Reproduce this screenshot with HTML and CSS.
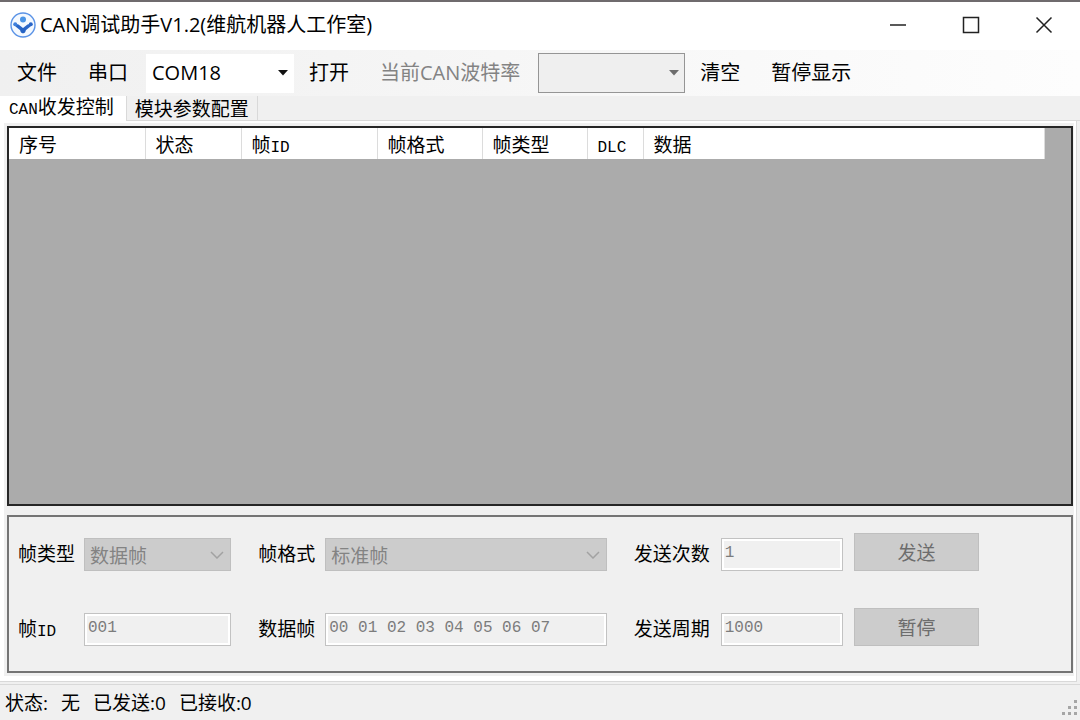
FILE: index.html
```html
<!DOCTYPE html>
<html lang="zh-CN">
<head>
  <meta charset="UTF-8">
  <meta name="viewport" content="width=device-width, initial-scale=1.0">
  <title>CAN调试助手V1.2(维航机器人工作室)</title>
  <link rel="stylesheet" href="styles.css">
</head>
<body>
  <header class="titlebar">
    <svg class="logo" width="26" height="26" viewBox="0 0 26 26" aria-hidden="true">
      <circle cx="13" cy="13" r="12" fill="#f4f9ff" stroke="#5b93e6" stroke-width="1.4"/>
      <circle cx="13" cy="7.5" r="3" fill="#4a94e6"/>
      <path d="M4 11.5L8.5 12.5L13 16L17.5 12.5L22 11.5L20.5 14.5L15.5 18.5L13 21.5L10.5 18.5L5.5 14.5Z" fill="#2a66c8"/>
      <circle cx="5.2" cy="12.2" r="2" fill="#3f80dc"/>
      <circle cx="20.8" cy="12.2" r="2" fill="#2a66c8"/>
      <circle cx="13" cy="18.6" r="2.6" fill="#2563c4"/>
    </svg>
    <h1 class="title">CAN调试助手V1.2(维航机器人工作室)</h1>
    <div class="window-buttons">
      <button type="button" aria-label="最小化">
        <svg width="18" height="18" viewBox="0 0 18 18"><path d="M1 9H17" stroke="#222" stroke-width="1.5"/></svg>
      </button>
      <button type="button" aria-label="最大化">
        <svg width="18" height="18" viewBox="0 0 18 18"><rect x="1.5" y="1.5" width="15" height="15" fill="none" stroke="#222" stroke-width="1.5"/></svg>
      </button>
      <button type="button" aria-label="关闭">
        <svg width="18" height="18" viewBox="0 0 18 18"><path d="M1.5 1.5L16.5 16.5M16.5 1.5L1.5 16.5" stroke="#222" stroke-width="1.5"/></svg>
      </button>
    </div>
  </header>

  <nav class="toolbar">
    <button type="button">文件</button>
    <button type="button">串口</button>
    <div class="combo combo-port">
      <select aria-label="串口号">
        <option>COM18</option>
      </select>
      <svg width="10" height="6" viewBox="0 0 10 6"><path d="M0 0H10L5 5.5Z" fill="#111"/></svg>
    </div>
    <button type="button">打开</button>
    <label class="baud-label" for="baud">当前CAN波特率</label>
    <div class="combo combo-baud">
      <select id="baud" disabled>
        <option></option>
      </select>
      <svg width="10" height="6" viewBox="0 0 10 6"><path d="M0 0H10L5 5.5Z" fill="#6d6d6d"/></svg>
    </div>
    <button type="button">清空</button>
    <button type="button">暂停显示</button>
  </nav>

  <div class="tabs" role="tablist">
    <button class="tab active" type="button" role="tab" aria-selected="true"><span class="latin">CAN</span>收发控制</button>
    <button class="tab" type="button" role="tab" aria-selected="false">模块参数配置</button>
  </div>

  <main class="page">
    <div class="page-inner">
      <div class="frames">
        <table>
          <colgroup>
            <col class="col-wide">
            <col class="col-state">
            <col class="col-wide">
            <col class="col-kind">
            <col class="col-kind">
            <col class="col-dlc">
            <col>
          </colgroup>
          <thead>
            <tr>
              <th>序号</th>
              <th>状态</th>
              <th>帧<span class="latin">ID</span></th>
              <th>帧格式</th>
              <th>帧类型</th>
              <th><span class="latin">DLC</span></th>
              <th>数据</th>
            </tr>
          </thead>
          <tbody></tbody>
        </table>
      </div>

      <form class="send-panel">
        <label for="frame-type">帧类型</label>
        <div class="combo combo-field">
          <select id="frame-type" disabled>
            <option>数据帧</option>
          </select>
          <svg width="14" height="8" viewBox="0 0 14 8"><path d="M1 1L7 7L13 1" fill="none" stroke="#a2a2a2" stroke-width="1.5"/></svg>
        </div>
        <label for="frame-format">帧格式</label>
        <div class="combo combo-field">
          <select id="frame-format" disabled>
            <option>标准帧</option>
          </select>
          <svg width="14" height="8" viewBox="0 0 14 8"><path d="M1 1L7 7L13 1" fill="none" stroke="#a2a2a2" stroke-width="1.5"/></svg>
        </div>
        <label for="send-count">发送次数</label>
        <input id="send-count" type="text" value="1" disabled>
        <button type="button" disabled>发送</button>

        <label for="frame-id">帧<span class="latin">ID</span></label>
        <input id="frame-id" type="text" value="001" disabled>
        <label for="frame-data">数据帧</label>
        <input id="frame-data" type="text" value="00 01 02 03 04 05 06 07" disabled>
        <label for="send-period">发送周期</label>
        <input id="send-period" type="text" value="1000" disabled>
        <button type="button" disabled>暂停</button>
      </form>
    </div>
  </main>

  <footer class="statusbar">
    <span>状态:</span>
    <span>无</span>
    <span>已发送:0</span>
    <span>已接收:0</span>
    <svg class="grip" width="18" height="18" viewBox="0 0 18 18" fill="#a6a6a6" aria-hidden="true">
      <path d="M13 1h3v3h-3zM7 7h3v3H7zM13 7h3v3h-3zM1 13h3v3H1zM7 13h3v3H7zM13 13h3v3h-3z"/>
    </svg>
  </footer>
</body>
</html>
```

FILE: styles.css
```css
* {
  box-sizing: border-box;
}
body {
  margin: 0;
  min-height: 100vh;
  display: flex;
  flex-direction: column;
  background-color: #f0f0f0;
  border-top: 2px solid #6f6b6d;
  color: #000;
  font-family: "Open Sans", "Noto Sans CJK SC", sans-serif;
  font-size: 20px;
  line-height: 24px;
}
button, select, input {
  margin: 0;
  padding: 0;
  border: none;
  border-radius: 0;
  background: none;
  color: inherit;
  font: inherit;
}

/* title bar */
.titlebar {
  display: flex;
  align-items: center;
  height: 48px;
  padding: 0 0 3px 10px;
  background-color: #fff;
}
.title {
  flex: 1;
  margin: 0 0 0 4px;
  font-size: 20px;
  font-weight: normal;
  white-space: nowrap;
}
.window-buttons {
  display: flex;
  align-self: stretch;
}
.window-buttons button {
  display: flex;
  align-items: center;
  justify-content: center;
  width: 73px;
}

/* toolbar */
.toolbar {
  display: flex;
  align-items: center;
  height: 46px;
  padding-left: 17px;
  background: linear-gradient(to right, #f0f0f0, #fdfdfd);
  white-space: nowrap;
}
.toolbar > button {
  margin-right: 31px;
}
.toolbar > button:nth-of-type(2) {
  margin-right: 18px;
}
.baud-label {
  margin-right: 18px;
  color: #838383;
}
.combo {
  display: grid;
  align-items: center;
}
.combo select,
.combo svg {
  grid-area: 1 / 1;
}
.combo select {
  appearance: none;
  width: 100%;
  height: 100%;
  opacity: 1;
}
.combo svg {
  justify-self: end;
  pointer-events: none;
}
.combo-port {
  width: 148px;
  height: 39px;
  margin-right: 15px;
  padding: 0 6px;
  background-color: #fff;
}
.combo-baud {
  width: 147px;
  height: 40px;
  margin-right: 15px;
  padding: 0 5px;
  border: 1px solid #959595;
  background-color: #efefef;
}

/* tabs */
.tabs,
.page {
  font-family: "Noto Sans CJK SC", sans-serif;
  font-size: 19px;
}
.latin {
  font-family: "Liberation Mono", monospace;
  font-size: 16px;
  line-height: 1;
}
.tabs {
  display: flex;
  height: 25px;
}
.tab {
  padding: 0 8px;
  border-right: 1px solid #d9d9d9;
  border-bottom: 1px solid #d9d9d9;
  line-height: 20px;
  white-space: nowrap;
}
.tab.active {
  padding: 0 12px 5px 9px;
  border-bottom: none;
  background-color: #fff;
}
.tabs::after {
  content: "";
  flex: 1;
  border-bottom: 1px solid #d9d9d9;
}

/* tab page */
.page {
  flex: 1;
  display: flex;
  margin-right: 3px;
  padding: 2px 2px 5px 4px;
  border-right: 1px solid #d9d9d9;
  border-bottom: 1px solid #d9d9d9;
  background-color: #fff;
}
.page-inner {
  flex: 1;
  display: flex;
  flex-direction: column;
  gap: 9px;
  min-width: 0;
  padding: 3px 1px 3px 3px;
  background-color: #f0f0f0;
}
.frames {
  flex: 1;
  padding-right: 26px;
  border: 2px solid #262626;
  background-color: #ababab;
}
.frames table {
  width: 100%;
  table-layout: fixed;
  border-collapse: collapse;
}
.frames th {
  height: 31px;
  padding: 0 0 0 10px;
  border-right: 1px solid #dcdcdc;
  background-color: #fff;
  font-weight: normal;
  text-align: left;
  white-space: nowrap;
}
.col-wide {
  width: 136px;
}
.col-state {
  width: 96px;
}
.col-kind {
  width: 105px;
}
.col-dlc {
  width: 56px;
}

/* send form */
.send-panel {
  display: grid;
  grid-template-columns: 66px 147fr 94px 281fr 114px 122fr 136px;
  grid-auto-rows: 38px;
  row-gap: 37px;
  align-items: end;
  padding: 16px 92px 25px 9px;
  border: 2px solid #747474;
}
.send-panel label {
  padding-bottom: 3px;
  line-height: 30px;
  white-space: nowrap;
}
.send-panel label .latin {
  line-height: 1;
}
.send-panel label:nth-of-type(3n + 2),
.send-panel label:nth-of-type(3n) {
  padding-left: 27px;
}
.combo-field {
  height: 33px;
  padding: 0 6px 0 5px;
  border: 1px solid #bfbfbf;
  background-color: #cccccc;
  color: #838383;
}
.send-panel input {
  width: 100%;
  min-width: 0;
  height: 33px;
  padding: 0 3px 4px;
  border: 1px solid #c2c2c2;
  background-color: #f0f0f0;
  box-shadow: inset 0 0 0 2px #fff;
  color: #7c7c7c;
  font-family: "Liberation Mono", monospace;
  font-size: 16px;
}
.send-panel button {
  height: 38px;
  margin-left: 11px;
  border: 1px solid #bfbfbf;
  background-color: #cccccc;
  color: #6d6d6d;
}

/* status bar */
.statusbar {
  display: flex;
  align-items: center;
  gap: 13px;
  height: 36px;
  margin-top: 2px;
  padding: 0 1px 0 5px;
  border-top: 1px solid #d9d9d9;
  font-size: 19px;
  white-space: nowrap;
}
.grip {
  align-self: flex-end;
  margin: 0 0 3px auto;
}
```
